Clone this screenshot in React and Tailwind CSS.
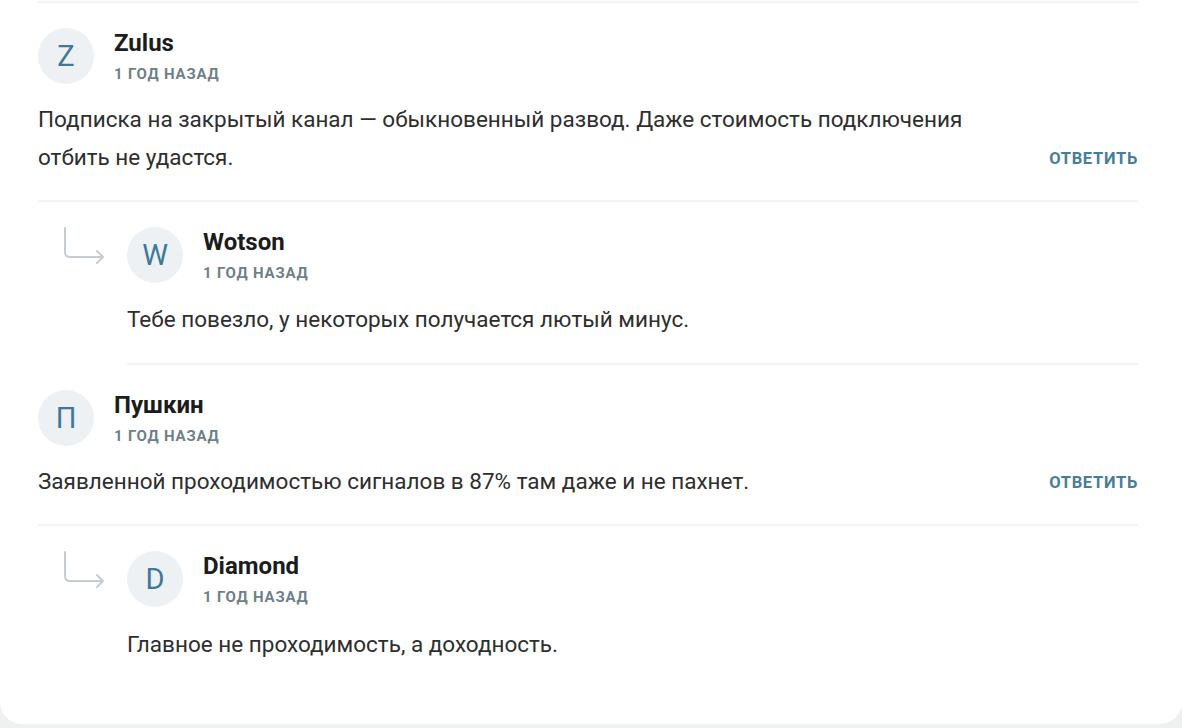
import React from "react";

const comments = [
  {
    id: 1,
    name: "Zulus",
    date: "1 год назад",
    text: "Подписка на закрытый канал — обыкновенный развод. Даже стоимость подключения отбить не удастся.",
    replies: [
      {
        id: 11,
        name: "Wotson",
        date: "1 год назад",
        text: "Тебе повезло, у некоторых получается лютый минус.",
      },
    ],
  },
  {
    id: 2,
    name: "Пушкин",
    date: "1 год назад",
    text: "Заявленной проходимостью сигналов в 87% там даже и не пахнет.",
    replies: [
      {
        id: 21,
        name: "Diamond",
        date: "1 год назад",
        text: "Главное не проходимость, а доходность.",
      },
    ],
  },
];

const Avatar = ({ name }) => (
  <div className="w-14 h-14 shrink-0 rounded-full bg-[#edf1f4] flex items-center justify-center">
    <span className="text-[29px] text-[#3f7996] leading-none">{name.charAt(0)}</span>
  </div>
);

const Header = ({ name, date }) => (
  <div className="flex items-start">
    <Avatar name={name} />
    <div className="ml-5 pt-[2px]">
      <div className="text-[24px] leading-[26px] font-bold text-[#1c1c1c]">{name}</div>
      <div className="mt-[9px] text-[15px] leading-[18px] font-bold uppercase tracking-[0.8px] text-[#6e7f8a]">
        {date}
      </div>
    </div>
  </div>
);

const ReplyArrow = () => (
  <svg width="46" height="42" viewBox="0 0 46 42" fill="none" className="ml-[22px] -mt-[2px]">
    <path
      d="M5 3 V27 Q5 32 10 32 H42"
      stroke="#c6cdd2"
      strokeWidth="2"
      strokeLinecap="round"
    />
    <path
      d="M37 26 L43 32 L37 38"
      stroke="#c6cdd2"
      strokeWidth="2"
      strokeLinecap="round"
      strokeLinejoin="round"
    />
  </svg>
);

const Comment = ({ comment }) => (
  <div>
    <div className="pt-[25px] pb-[24px] border-b-2 border-[#f3f4f4]">
      <Header name={comment.name} date={comment.date} />
      <div className="mt-4 flex items-end">
        <p className="flex-1 max-w-[975px] text-[22.5px] leading-[38px] text-[#2e2e2e]">
          {comment.text}
        </p>
        <button className="ml-auto shrink-0 translate-y-[2px] text-[16.5px] leading-[38px] font-bold uppercase tracking-[0.7px] text-[#487d98]">
          Ответить
        </button>
      </div>
    </div>
    {comment.replies.map((reply) => (
      <div key={reply.id} className="flex">
        <div className="w-[89px] shrink-0 pt-[25px]">
          <ReplyArrow />
        </div>
        <div
          className={`flex-1 pt-[25px] ${
            comment.id === 1 ? "pb-[25px] border-b-2 border-[#f3f4f4]" : "pb-[25px]"
          }`}
        >
          <Header name={reply.name} date={reply.date} />
          <p
            className={`${
              comment.id === 1 ? "mt-[17px]" : "mt-[18px]"
            } text-[22.5px] leading-[38px] text-[#2e2e2e]`}
          >
            {reply.text}
          </p>
        </div>
      </div>
    ))}
  </div>
);

export default function App() {
  return (
    <div
      className="min-h-screen bg-[#eff1f1]"
      style={{ fontFamily: "Roboto, 'Noto Sans', sans-serif" }}
    >
      <div className="bg-white rounded-b-[22px] pl-[38px] pr-[44px] pb-[36px]">
        <div className="pt-[1px]">
          <div className="h-[2px] bg-[#f3f4f4]"></div>
        </div>
        {comments.map((c) => (
          <Comment key={c.id} comment={c} />
        ))}
      </div>
    </div>
  );
}
